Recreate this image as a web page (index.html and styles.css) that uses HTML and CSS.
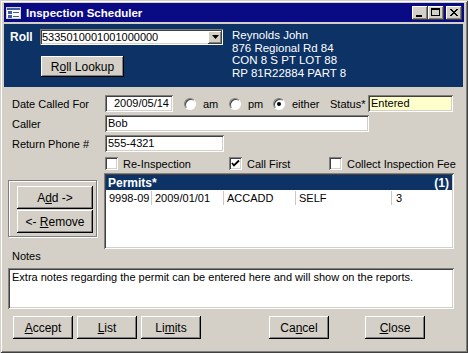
FILE: index.html
```html
<html>

<head>
  <title>Inspection Scheduler</title>
  <link rel="stylesheet" href="styles.css">
</head>

<body>
  <div class="win">
    <div class="titlebar">
      <svg class="appicon" width="15" height="12" viewBox="0 0 15 12">
        <rect x="0.5" y="0.5" width="14" height="11" fill="#fff" stroke="#d4d0c8"/>
        <rect x="1" y="1" width="13" height="2" fill="#3a5ea8"/>
        <rect x="2" y="4" width="4" height="3" fill="#3a5ea8"/>
        <rect x="7" y="5" width="6" height="1" fill="#3a5ea8"/>
        <rect x="2" y="8" width="4" height="3" fill="#3a5ea8"/>
        <rect x="7" y="9" width="6" height="1" fill="#3a5ea8"/>
      </svg>
      <span class="title">Inspection Scheduler</span>
      <div class="ctrls">
        <span class="cbtn"><svg width="16" height="14"><rect x="4" y="9" width="6" height="2" fill="#000"/></svg></span>
        <span class="cbtn"><svg width="16" height="14"><rect x="3.5" y="2.5" width="8" height="7" fill="none" stroke="#000"/><rect x="3" y="2" width="9" height="2" fill="#000"/></svg></span>
        <span class="cbtn close"><svg width="16" height="14"><path d="M4 3 L11 10 M5 3 L12 10 M11 3 L4 10 M12 3 L5 10" stroke="#000" stroke-width="1"/></svg></span>
      </div>
    </div>

    <div class="client">
      <!-- roll header -->
      <div class="header">
        <div class="hleft">
          <div class="rollrow">
            <b class="roll-label">Roll</b>
            <div class="combo sunken">
              <span class="combo-text">5335010001001000000</span>
              <span class="drop raised"><svg width="7" height="4"><path d="M0 0 H7 L3.5 4 Z" fill="#000"/></svg></span>
            </div>
          </div>
          <button class="btn lookup">R<u>o</u>ll Lookup</button>
        </div>
        <div class="address">
          Reynolds John<br>
          876 Regional Rd 84<br>
          CON 8 S PT LOT 88<br>
          RP 81R22884 PART 8
        </div>
      </div>

      <div class="form">
        <div class="row">
          <span class="lbl">Date Called For</span>
          <div class="field sunken date">2009/05/14</div>
          <span class="opt opt-am"><span class="radio"></span>am</span>
          <span class="opt opt-pm"><span class="radio"></span>pm</span>
          <span class="opt opt-either"><span class="radio on"></span>either</span>
          <span class="status-lbl">Status*</span>
          <div class="field sunken status">Entered</div>
        </div>
        <div class="row">
          <span class="lbl">Caller</span>
          <div class="field sunken caller">Bob</div>
        </div>
        <div class="row">
          <span class="lbl">Return Phone #</span>
          <div class="field sunken phone">555-4321</div>
        </div>
        <div class="row checks">
          <span class="chk chk-re"><span class="box sunken"></span>Re-Inspection</span>
          <span class="chk chk-call"><span class="box sunken"><svg width="9" height="9"><path d="M1 4 L3 6.5 L8 1.5" fill="none" stroke="#000" stroke-width="1.8"/></svg></span>Call First</span>
          <span class="chk"><span class="box sunken"></span>Collect Inspection Fee</span>
        </div>

        <div class="lower">
          <div class="group">
            <button class="btn addrem">A<u>d</u>d -&gt;</button>
            <button class="btn addrem">&lt;- <u>R</u>emove</button>
          </div>
          <div class="permits sunken">
            <div class="phead"><span>Permits*</span><span>(1)</span></div>
            <div class="prow">
              <span class="pc c1">9998-09</span>
              <span class="pc c2">2009/01/01</span>
              <span class="pc c3">ACCADD</span>
              <span class="pc c4">SELF</span>
              <span class="pc c5">3</span>
            </div>
          </div>
        </div>

        <div class="notes-lbl">Notes</div>
        <div class="notes sunken">Extra notes regarding the permit can be entered here and will show on the reports.</div>

        <div class="actions">
          <button class="btn act"><u>A</u>ccept</button>
          <button class="btn act"><u>L</u>ist</button>
          <button class="btn act">Li<u>m</u>its</button>
          <button class="btn act cancel">Ca<u>n</u>cel</button>
          <button class="btn act close-btn"><u>C</u>lose</button>
        </div>
      </div>
    </div>
  </div>
</body>

</html>
```

FILE: styles.css
```css
body {
  margin: 0;
  background: #d4d0c8;
  font-family: "Liberation Sans", Arial, sans-serif;
  font-size: 11px;
  color: #000;
}

.win {
  width: 468px;
  height: 353px;
  box-sizing: border-box;
  padding: 3px 4px 4px 4px;
  background: #d4d0c8;
  box-shadow: inset 1px 1px #d4d0c8, inset -1px -1px #404040, inset 2px 2px #fff, inset -2px -2px #808080;
}

/* 3d borders */
.raised {
  background: #d4d0c8;
  box-shadow: inset -1px -1px #404040, inset 1px 1px #fff, inset -2px -2px #808080, inset 2px 2px #d4d0c8;
}

.sunken {
  background: #fff;
  box-shadow: inset 1px 1px #808080, inset -1px -1px #fff, inset 2px 2px #404040, inset -2px -2px #d4d0c8;
}

/* title */
.titlebar {
  height: 19px;
  background: #0a0a84;
  display: flex;
  align-items: center;
  color: #fff;
}

.appicon {
  margin-left: 2px;
  margin-right: 5px;
}

.title {
  font-weight: bold;
  font-size: 11.5px;
  flex: 1;
}

.ctrls {
  display: flex;
  margin-right: 2px;
}

.cbtn {
  width: 16px;
  height: 14px;
  background: #d4d0c8;
  box-shadow: inset -1px -1px #404040, inset 1px 1px #fff, inset -2px -2px #808080, inset 2px 2px #d4d0c8;
}

.cbtn svg {
  display: block;
}

.cbtn.close {
  margin-left: 2px;
}

.client {
  margin-top: 2px;
}

/* header */
.header {
  height: 63px;
  width: 459px;
  background: #0c3266;
  color: #fff;
  display: flex;
}

.hleft {
  padding: 5px 0 0 6px;
  width: 213px;
}

.rollrow {
  display: flex;
  align-items: center;
}

.roll-label {
  width: 30px;
  font-size: 12px;
}

.combo {
  width: 183px;
  height: 16px;
  display: flex;
  align-items: center;
  color: #000;
}

.combo-text {
  padding-left: 2px;
  flex: 1;
}

.drop {
  width: 14px;
  height: 13px;
  margin-right: 1px;
  display: flex;
  align-items: center;
  justify-content: center;
}

.address {
  padding: 5px 0 0 9px;
  line-height: 12.7px;
  font-size: 11.5px;
}

.btn {
  font-family: "Liberation Sans", Arial, sans-serif;
  font-size: 11px;
  color: #000;
  border: none;
  padding: 0;
  background: #d4d0c8;
  box-shadow: inset -1px -1px #000, inset 1px 1px #fff, inset -2px -2px #808080, inset 2px 2px #d4d0c8;
}

.lookup {
  display: block;
  width: 83px;
  height: 21px;
  margin: 11px 0 0 31px;
  font-size: 12px;
}

/* form */
.form {
  padding: 8px 0 0 4px;
}

.row {
  display: flex;
  align-items: center;
  height: 17px;
  margin-bottom: 3px;
}

.lbl {
  width: 93px;
  padding-left: 4px;
}

.field {
  height: 17px;
  box-sizing: border-box;
  padding: 2px 3px 0 3px;
  line-height: 13px;
}

.date {
  width: 68px;
  text-align: right;
  padding-right: 4px;
}

.opt {
  display: flex;
  align-items: center;
}

.opt-am {
  margin-left: 11px;
  width: 45px;
}

.opt-pm {
  width: 44px;
}

.opt-either {
  width: 57px;
}

.radio {
  width: 12px;
  height: 12px;
  box-sizing: border-box;
  border-radius: 50%;
  background: #fff;
  border: 1px solid;
  border-color: #808080 #fff #fff #808080;
  box-shadow: inset 1px 1px #404040;
  margin-right: 7px;
  display: flex;
  align-items: center;
  justify-content: center;
}

.radio.on::after {
  content: "";
  width: 4px;
  height: 4px;
  border-radius: 50%;
  background: #000;
}

.status-lbl {
  width: 38px;
}

.status {
  width: 85px;
  background: #ffffcc;
}

.caller {
  width: 264px;
}

.phone {
  width: 119px;
}

.checks {
  margin-top: 5px;
  height: 13px;
  padding-left: 97px;
}

.chk {
  display: flex;
  align-items: center;
}

.chk-re {
  width: 124px;
}

.chk-call {
  width: 100px;
}

.box {
  width: 13px;
  height: 13px;
  margin-right: 5px;
  display: flex;
  align-items: center;
  justify-content: center;
}

/* lower part */
.lower {
  display: flex;
  margin-top: 3px;
}

.group {
  width: 89px;
  height: 57px;
  box-sizing: border-box;
  margin-top: 7px;
  padding: 5px 0 0 8px;
  border: 1px solid #808080;
  box-shadow: inset 1px 1px #fff, 1px 1px #fff;
}

.addrem {
  display: block;
  width: 76px;
  height: 23px;
  margin-bottom: 1px;
  font-size: 12px;
}

.permits {
  margin-left: 7px;
  width: 350px;
  height: 76px;
  box-sizing: border-box;
  padding: 2px;
}

.phead {
  height: 15px;
  background: #0c3266;
  color: #fff;
  font-weight: bold;
  font-size: 12px;
  display: flex;
  justify-content: space-between;
  align-items: center;
  padding: 0 3px 0 2px;
}

.prow {
  display: flex;
  height: 15px;
  align-items: center;
  font-size: 11px;
  white-space: nowrap;
}

.pc {
  box-sizing: border-box;
  padding-left: 3px;
  height: 14px;
  line-height: 14px;
  border-right: 1px solid #c8c8c8;
  overflow: hidden;
}

.c1 { width: 46px; }
.c2 { width: 72px; }
.c3 { width: 72px; }
.c4 { width: 96px; }
.c5 { border-right: none; padding-left: 4px; }

.notes-lbl {
  margin-top: 1px;
  padding-left: 4px;
  line-height: 13px;
}

.notes {
  margin-top: 5px;
  width: 446px;
  height: 41px;
  box-sizing: border-box;
  padding: 3px 4px;
}

.actions {
  display: flex;
  margin-top: 7px;
  padding-left: 5px;
}

.act {
  width: 60px;
  height: 23px;
  margin-right: 4px;
  font-size: 12px;
}

.cancel {
  margin-left: 64px;
}

.close-btn {
  margin-left: 32px;
}
```
